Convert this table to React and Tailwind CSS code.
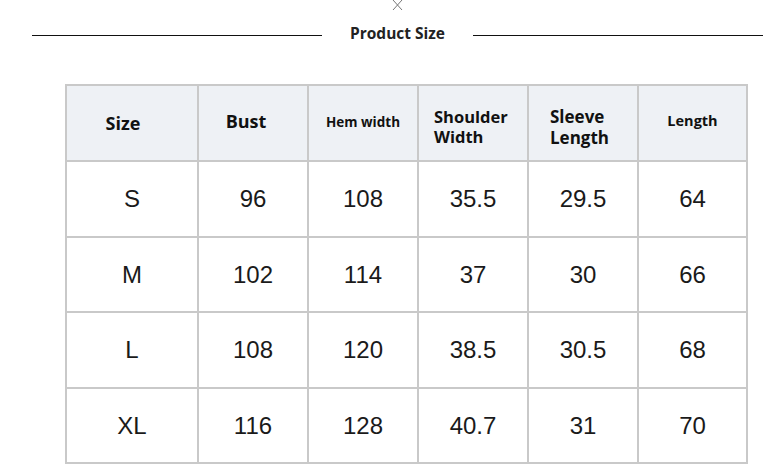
import React from "react";

const rows = [
  ["S", "96", "108", "35.5", "29.5", "64"],
  ["M", "102", "114", "37", "30", "66"],
  ["L", "108", "120", "38.5", "30.5", "68"],
  ["XL", "116", "128", "40.7", "31", "70"],
];
const heights = ["h-[76px]", "h-[75px]", "h-[76px]", "h-[75px]"];
const th = "border-2 border-[#c9c9c9] p-0 font-bold text-[#111]";

export default function App() {
  return (
    <div className="w-[770px] h-[475px] bg-white overflow-hidden relative" style={{ fontFamily: '"Open Sans", sans-serif' }}>
      <svg className="absolute left-[392px] top-0" width="11" height="11" viewBox="0 0 11 11">
        <path d="M1 0 L10 10 M10 0 L1 10" stroke="#777" strokeWidth="1" fill="none" />
      </svg>
      <div className="flex items-center h-[20px] mt-[25px] pl-[32px]">
        <div className="w-[290px] h-px bg-[#111]" />
        <div className="w-[151px] text-center text-[15.5px] leading-[20px] pb-[4px] font-bold text-[#222]">Product Size</div>
        <div className="w-[290px] h-px bg-[#111]" />
      </div>
      <div className="ml-[65px] mt-[39px]">
        <table className="border-collapse border-2 border-[#c9c9c9]">
          <thead>
            <tr className="h-[76px] bg-[#eef1f5]">
              <th className={`w-[132px] ${th} text-[18px]`}>
                <div className="pr-[18px]">Size</div>
              </th>
              <th className={`w-[110px] ${th} text-[18px]`}>
                <div className="pr-[14px] pb-[4px]">Bust</div>
              </th>
              <th className={`w-[110px] ${th} text-[13.5px]`}>
                <div className="pb-[2px]">Hem width</div>
              </th>
              <th className={`w-[110px] ${th} text-[16.5px] leading-[20px]`}>
                <div className="text-left pl-[15px] pt-[8px]">Shoulder<br />Width</div>
              </th>
              <th className={`w-[110px] ${th} text-[17px] leading-[21px]`}>
                <div className="text-left pl-[21px] pt-[8px]">Sleeve<br />Length</div>
              </th>
              <th className={`w-[109px] ${th} text-[14.5px]`}>
                <div className="pb-[4px]">Length</div>
              </th>
            </tr>
          </thead>
          <tbody>
            {rows.map((r, i) => (
              <tr key={i} className={heights[i]}>
                {r.map((c, j) => (
                  <td
                    key={j}
                    className="border-2 border-[#c9c9c9] p-0 text-center text-[24px] text-[#1a1a1a]"
                    style={{ fontFamily: '"Liberation Sans", Arial, sans-serif' }}
                  >
                    {c}
                  </td>
                ))}
              </tr>
            ))}
          </tbody>
        </table>
      </div>
    </div>
  );
}
